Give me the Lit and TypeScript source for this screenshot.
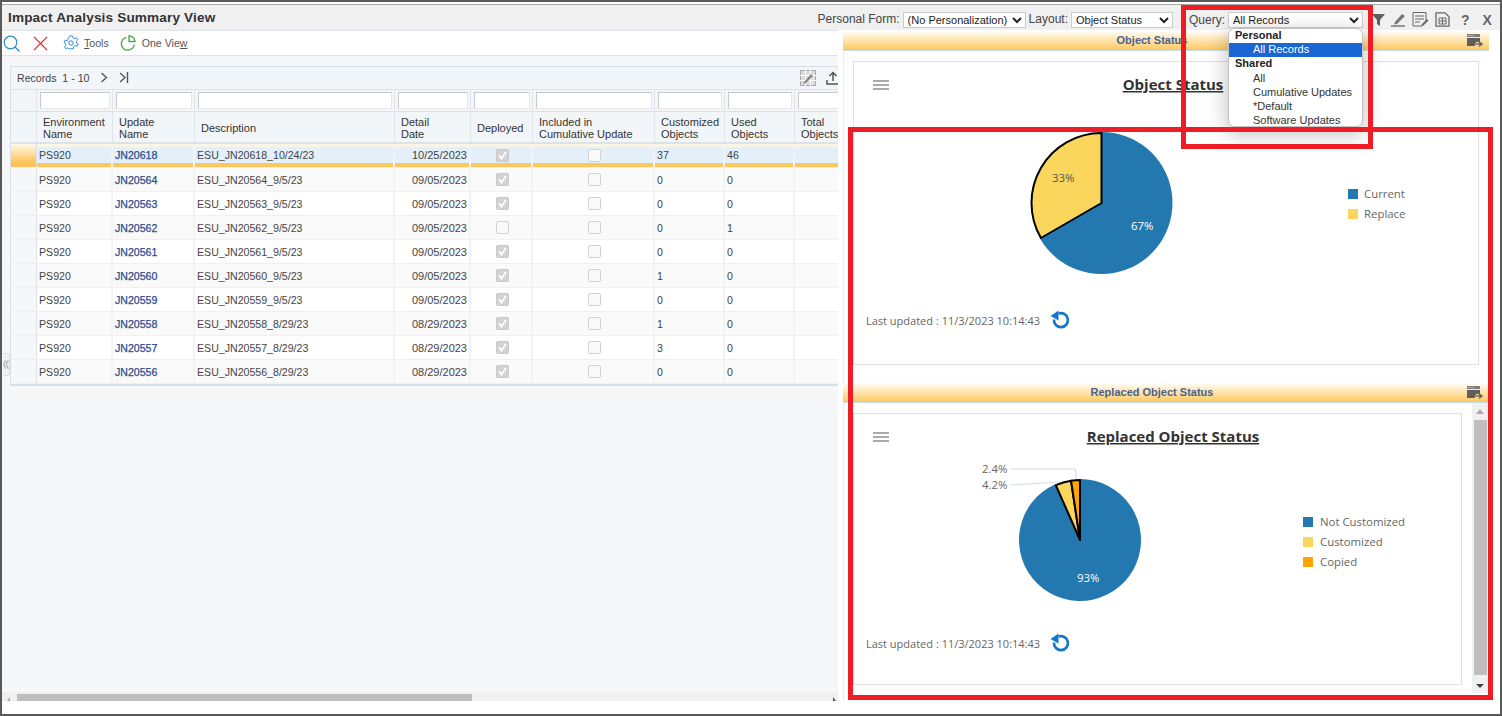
import { LitElement, html, css, svg } from "lit";
import { customElement } from "lit/decorators.js";

const rows = [
  ["JN20618", "10/24/23", "10/25/2023", true, "37", "46"],
  ["JN20564", "9/5/23", "09/05/2023", true, "0", "0"],
  ["JN20563", "9/5/23", "09/05/2023", true, "0", "0"],
  ["JN20562", "9/5/23", "09/05/2023", false, "0", "1"],
  ["JN20561", "9/5/23", "09/05/2023", true, "0", "0"],
  ["JN20560", "9/5/23", "09/05/2023", true, "1", "0"],
  ["JN20559", "9/5/23", "09/05/2023", true, "0", "0"],
  ["JN20558", "8/29/23", "08/29/2023", true, "1", "0"],
  ["JN20557", "8/29/23", "08/29/2023", true, "3", "0"],
  ["JN20556", "8/29/23", "08/29/2023", true, "0", "0"],
] as const;

const heads = ["", "Environment<br>Name", "Update<br>Name", "Description", "Detail<br>Date", "Deployed", "Included in<br>Cumulative Update", "Customized<br>Objects", "Used<br>Objects", "Total<br>Objects"];

const wedge = (cx: number, cy: number, r: number, a0: number, a1: number) => {
  const p = (a: number) => `${cx + r * Math.sin((a * Math.PI) / 180)} ${cy - r * Math.cos((a * Math.PI) / 180)}`;
  const large = Math.abs(a1 - a0) > 180 ? 1 : 0;
  return `M${cx} ${cy}L${p(a0)}A${r} ${r} 0 ${large} 1 ${p(a1)}Z`;
};

const burger = (y: number) => svg`<path d="M873 ${y}h16M873 ${y + 4}h16M873 ${y + 8}h16" stroke="#8f8f8f" stroke-width="1.6" fill="none"/>`;

const refresh = html`<svg class="refresh" width="22" height="20" viewBox="0 0 22 20"><path d="M8.5 3.6A7 7 0 1 1 4 9.5" fill="none" stroke="#1577c9" stroke-width="2.6"/><path d="M0.5 6 L8.5 0.6 V10.6Z" fill="#1577c9"/></svg>`;

const bandIcon = html`<svg class="band-icon" width="17" height="13" viewBox="0 0 17 13"><path d="M0 0h13v3H0z" fill="#7d7d7d"/><path d="M0 4h13v4H9v1.500H8V12H0z" fill="#5f5f5f"/><path d="M1.500 1.500h1M3.500 1.500h1M5.500 1.500h1" stroke="#fff" stroke-width=".8"/><path d="M8.500 10h5.500M12 7.800l3 2.300-3 2.300" fill="none" stroke="#666" stroke-width="1.500"/></svg>`;

@customElement("app-root")
export class AppRoot extends LitElement {
  static styles = css`
    :host { display: block; position: relative; width: 1502px; height: 716px; overflow: hidden; background: #fff; font-family: "Liberation Sans", Arial, sans-serif; font-size: 10.6px; color: #333; }
    .frame { box-sizing: border-box; height: 716px; border: 2px solid #5a5a5a; padding-top: 2px; display: flex; flex-direction: column; background: #fff; }
    .titlebar { height: 26px; box-sizing: border-box; border-top: 1px solid #a8a8a8; background: #f0f0f0; display: flex; align-items: center; padding: 0 0 0 6px; flex: none; }
    h1 { margin: 0; font-size: 13.6px; font-weight: bold; color: #333; flex: 1; letter-spacing: .15px; }
    .lbl { font-size: 12px; color: #444; margin-top: 2px; }
    .qwrap .lbl { margin-top: 0; }
    select { font: 11px "Liberation Sans", Arial, sans-serif; height: 16px; border: 1px solid #ccc; background: #fff; color: #222; padding: 0; border-radius: 0; box-sizing: border-box; }
    .s1 { width: 123px; margin: 5px 3px 0 3px; }
    .s2 { width: 102px; margin: 5px 0 0 3px; }
    .s3 { width: 135px; margin: 0 0 0 3px; }
    .qwrap { position: relative; display: flex; align-items: center; margin: 5px 0 0 16px; }
    .tools { display: flex; align-items: center; margin: 4px 0 0 9px; width: 128px; color: #5f5f5f; }
    .tools svg { flex: none; }
    .tools b { font-size: 14px; color: #666; }
    .main { flex: 1; display: flex; min-height: 0; }
    .left { width: 836px; flex: none; display: flex; flex-direction: column; position: relative; }
    .toolbar { height: 26px; box-sizing: border-box; border-top: 1px solid #dde3e8; border-bottom: 1px solid #dde3e8; display: flex; align-items: center; background: #fff; flex: none; color: #555; }
    .toolbar svg { flex: none; }
    .toolbar u { text-decoration: underline; }
    .content { flex: 1; background: #f5f7f9; padding: 10px 0 0 8px; overflow: hidden; min-height: 0; }
    .grid { width: 854px; border: 1px solid #d8e0e7; border-bottom-width: 2px; box-sizing: border-box; background: #f3f6f8; }
    .rec { height: 23px; box-sizing: border-box; display: flex; align-items: center; padding: 0 0 1px 6px; border-bottom: 1px solid #dbe2e8; color: #444; font-size: 10.6px; }
    .rec .pg { width: 83px; }
    .r { display: grid; box-sizing: border-box; grid-template-columns: 26px 76px 82px 200px 76px 62px 122px 70px 70px 70px; }
    .r > div { box-sizing: border-box; border-right: 1px solid #dfe5ea; display: flex; align-items: center; min-width: 0; }
    .filter { height: 22px; border-bottom: 1px solid #dbe2e8; }
    .filter i { display: block; box-sizing: border-box; height: 17px; width: calc(100% - 5px); margin: 0 2px 0 3px; background: #fff; border: 1px solid #c9c9c9; border-bottom-color: #e6e6e6; border-right-color: #e6e6e6; }
    .head { height: 32px; border-bottom: 2px solid #dbe2e8; line-height: 12px; font-size: 11px; }
    .head > div { padding: 2px 0 0 6px; color: #333; }
    .data { height: 24px; background: #fff; border-bottom: 1px solid #eef0f2; }
    .data.alt { background: #fafafa; }
    .data > div { border-right: 2px solid #f1f3f5; padding-left: 2px; color: #444; }
    .data .rh { background: #f5f7fa; border-right: 1px solid #dbe2e8; }
    .data .num { justify-content: flex-end; padding: 0 2px 0 0; font-size: 11px; }
    .data .mid { justify-content: center; padding: 0 0 0 2px; }
    .data a { color: #2a4d8f; -webkit-text-stroke: .25px #2a4d8f; }
    .data.sel > div { background: #e3f0fa; box-shadow: inset 0 3px #fbf5e6, inset 0 -4px #fec75e; padding-bottom: 1px; }
    .data.sel .rh { background: linear-gradient(#fff8ea, #fdc45a 80%); box-shadow: none; }
    .cb { width: 13px; height: 13px; box-sizing: border-box; border: 1px solid #d2d2d2; border-radius: 2px; background: #fafafa; display: block; }
    .cb.on { background: #d3d3d3; border-color: #c8c8c8; }
    .cb svg { display: block; }
    .handle { position: absolute; left: 1px; top: 323px; width: 7px; height: 23px; box-sizing: border-box; background: #eef2f6; border: 1px solid #d8e0e7; border-left: 0; border-radius: 0 3px 3px 0; display: flex; align-items: center; }
    .hscroll { height: 9px; flex: none; background: #f0f0f0; display: flex; align-items: center; padding: 2px 0 0 15px; box-sizing: border-box; position: relative; }
    .hscroll i { display: block; width: 455px; height: 7px; background: #bebebe; }
    .hscroll s { position: absolute; bottom: 0; width: 0; height: 0; border-style: solid; }
    .hscroll .la { left: 5px; border-width: 0 0 4px 3px; border-color: transparent transparent #aaa transparent; }
    .hscroll .ra { right: 2px; border-width: 4px 0 0 3px; border-color: transparent transparent transparent #555; }
    .foot { height: 13px; flex: none; background: #fff; }
    .right { margin-left: 5px; width: 646px; flex: none; padding-top: 1px; background: #fff; display: flex; flex-direction: column; }
    .band { height: 18px; padding: 0 28px 1px 0; box-sizing: content-box; flex: none; background: linear-gradient(#fffdf8, #fdc95f); border-bottom: 1px solid #c6dbe8; display: flex; align-items: center; justify-content: center; position: relative; font-weight: bold; font-size: 11px; color: #4d5f8e; }
    .band-icon { position: absolute; right: 5px; top: 3px; }
    .s-top { flex: none; height: 332px; padding: 10px 0 0 10px; box-sizing: border-box; border-left: 1px solid #e4eef6; }
    .s-bot { display: flex; height: 297px; flex: none; padding: 10px 0 0 10px; box-sizing: border-box; border-left: 1px solid #e4eef6; }
    .card { box-sizing: border-box; border: 1px solid #e0e0e0; background: #fff; flex: none; }
    .c1 { width: 626px; height: 304px; margin-left: -1px; }
    .c2 { width: 609px; height: 272px; margin-left: -1px; }
    .card svg.chart { display: block; }
    .card text { font-family: "Open Sans", sans-serif; fill: #666; font-size: 11.4px; }
    .card text.ttl { font-size: 15px; font-weight: bold; fill: #333; text-decoration: underline; text-anchor: middle; }
    .card text.w { fill: #fff; }
    .card text.d { fill: #555; }
    .updated { height: 28px; display: flex; align-items: center; padding-left: 12px; font-family: "Open Sans", sans-serif; font-size: 11px; color: #666; }
    .refresh { margin-left: 10px; flex: none; }
    .vscroll { width: 16px; flex: none; margin-left: 10px; height: 291px; margin-top: -11px; background: #f0f0f0; display: flex; flex-direction: column; align-items: center; }
    .vscroll i { display: block; width: 13px; height: 255px; background: #bebebe; flex: none; }
    .vscroll .u { width: 0; height: 0; margin: 7px 0 6px; border: 4px solid transparent; border-top: 0; border-bottom: 5px solid #aaa; }
    .vscroll .dn { width: 0; height: 0; margin: 9px 0 0; border: 4px solid transparent; border-bottom: 0; border-top: 4px solid #444; }
    .menu { position: absolute; left: 39px; top: 16px; width: 135px; height: 99px; box-sizing: border-box; background: #fff; border: 1px solid #c4c4c4; border-radius: 7px; z-index: 3; box-shadow: 0 6px 22px rgba(0,0,0,.28); font-size: 11px; overflow: hidden; color: #333; }
    .menu div { height: 14px; line-height: 13px; padding-left: 24px; white-space: nowrap; }
    .menu .g { font-weight: bold; padding-left: 6px; color: #222; }
    .menu .on { background: #1a66d2; color: #fff; }
    .menu .on + .g { margin-bottom: 1px; }
    .anno { position: absolute; box-sizing: border-box; border: 5px solid #ee1c25; z-index: 5; pointer-events: none; }
    .a1 { left: 1181px; top: 5px; width: 192px; height: 144px; }
    .a2 { left: 848px; top: 127px; width: 645px; height: 573px; }
  `;

  private chart1() {
    return html`<svg class="chart" width="624" height="244" viewBox="854 62 624 244">
      ${burger(81)}
      <text class="ttl" x="1173" y="90">Object Status</text>
      <path d=${wedge(1101.5, 203, 71, 0, 240)} fill="#2378b0"/>
      <path d=${wedge(1101.5, 203, 70, 240, 360)} fill="#fad65c" stroke="#000" stroke-width="2" stroke-linejoin="round"/>
      <text class="d" x="1052" y="182">33%</text>
      <text class="w" x="1131" y="230">67%</text>
      <rect x="1348" y="189" width="10" height="10" fill="#2378b0"/>
      <text x="1364" y="198">Current</text>
      <rect x="1348" y="209" width="10" height="10" fill="#fad65c"/>
      <text x="1364" y="218">Replace</text>
    </svg>`;
  }

  private chart2() {
    return html`<svg class="chart" width="607" height="215" viewBox="854 414 607 215">
      ${burger(433)}
      <text class="ttl" x="1173" y="442">Replaced Object Status</text>
      <path d="M1010 469H1075.500L1076.500 479M1010 485L1060 482" fill="none" stroke="#d5dde8" stroke-width="1.200"/>
      <text x="982" y="473">2.4%</text>
      <text x="982" y="489">4.2%</text>
      <path d=${wedge(1080, 540, 61, 0, 336.2)} fill="#2378b0"/>
      <path d=${wedge(1080, 540, 60, 336.2, 351.4)} fill="#fad65c" stroke="#000" stroke-width="2" stroke-linejoin="round"/>
      <path d=${wedge(1080, 540, 60, 351.4, 360)} fill="#ffa500" stroke="#000" stroke-width="2" stroke-linejoin="round"/>
      <text class="w" x="1077" y="582">93%</text>
      <rect x="1303" y="517" width="10" height="10" fill="#2378b0"/>
      <text x="1320" y="526">Not Customized</text>
      <rect x="1303" y="537" width="10" height="10" fill="#fad65c"/>
      <text x="1320" y="546">Customized</text>
      <rect x="1303" y="557" width="10" height="10" fill="#ffa500"/>
      <text x="1320" y="566">Copied</text>
    </svg>`;
  }

  render() {
    return html`
      <div class="frame">
        <div class="titlebar">
          <h1>Impact Analysis Summary View</h1>
          <span class="lbl">Personal Form:</span>
          <select class="s1"><option>(No Personalization)</option></select>
          <span class="lbl">Layout:</span>
          <select class="s2"><option>Object Status</option></select>
          <div class="qwrap">
            <span class="lbl">Query:</span>
            <select class="s3"><option>All Records</option></select>
            <div class="menu">
              <div class="g">Personal</div>
              <div class="on">All Records</div>
              <div class="g">Shared</div>
              <div>All</div><div>Cumulative Updates</div><div>*Default</div><div>Software Updates</div>
            </div>
          </div>
          <div class="tools">
            <svg width="13" height="13" viewBox="0 0 13 13"><path d="M0 1h13L8 7v6L5 11V7z" fill="#5f5f5f"/></svg>
            <svg style="margin-left:6px" width="15" height="14" viewBox="0 0 15 14"><path d="M4 9l7-8 3 2-8 8-3 .500z" fill="#777"/><path d="M0 13h14" stroke="#777" stroke-width="1.500"/></svg>
            <svg style="margin-left:6px" width="17" height="15" viewBox="0 0 17 15"><path d="M1 .500h13v9l-4 4.500H1z" fill="none" stroke="#666"/><path d="M3 4h9M3 7h9M3 10h5" stroke="#666"/><path d="M10 12l5-5 1.500 1.500-5 5-2 .500z" fill="#666"/></svg>
            <svg style="margin-left:6px" width="15" height="15" viewBox="0 0 15 15"><path d="M1 .800h9l4 4v9.400H1z" fill="none" stroke="#666" stroke-width="1.300"/><path d="M4 6h7v6H4zM7.500 6v6M4 9h7" fill="none" stroke="#666"/></svg>
            <b style="margin-left:11px">?</b>
            <b style="margin-left:13px">X</b>
          </div>
        </div>
        <div class="main">
          <div class="left">
            <div class="toolbar">
              <svg style="margin-left:1px" width="17" height="17" viewBox="0 0 17 17"><circle cx="7.500" cy="7.500" r="6.300" fill="none" stroke="#2c8ad0" stroke-width="1.200"/><path d="M12 12l4.500 4.500" stroke="#2c8ad0" stroke-width="1.200"/></svg>
              <svg style="margin-left:13px" width="15" height="15" viewBox="0 0 15 15"><path d="M1 1l13 13M14 1L1 14" stroke="#e0353a" stroke-width="1.200"/></svg>
              <svg style="margin-left:15px" width="16" height="16" viewBox="0 0 16 16"><path d="M6.500 1h3l.5 2 1.800.8 1.800-1 1.500 2.200-1.400 1.400.2 2 1.600 1-1.300 2.400-2-.6-1.500 1.200-.4 2.100h-3L6 14.500l-1.800-.9-1.900 .9L1 12.200l1.400-1.400-.2-2-1.700-1 1.300-2.400 2 .600L5.300 2.900z" fill="none" stroke="#2c8ad0" transform="translate(.5 0) scale(.95)"/><circle cx="8" cy="8" r="2.200" fill="none" stroke="#2c8ad0"/></svg>
              <span style="margin-left:5px"><u>T</u>ools</span>
              <svg style="margin-left:11px" width="16" height="16" viewBox="0 0 16 16"><path d="M6.500 2.300A6.500 6.500 0 1 0 14.300 9.500" fill="none" stroke="#4aa34a" stroke-width="1.300"/><path d="M9 1v5.500h6A6 6 0 0 0 9 1z" fill="none" stroke="#4aa34a" stroke-width="1.300"/></svg>
              <span style="margin-left:6px">One Vie<u>w</u></span>
            </div>
            <div class="content">
              <div class="grid">
                <div class="rec">
                  <span class="pg">Records&nbsp; 1 - 10</span>
                  <svg width="8" height="11" viewBox="0 0 8 11"><path d="M1.500 1l5 4.500-5 4.500" fill="none" stroke="#555" stroke-width="1.400"/></svg>
                  <svg style="margin-left:11px" width="10" height="11" viewBox="0 0 10 11"><path d="M1 1l5 4.500-5 4.500M8.500 0v11" fill="none" stroke="#555" stroke-width="1.400"/></svg>
                  <span style="width:671px"></span>
                  <svg width="16" height="16" viewBox="0 0 16 16"><rect x=".5" y=".5" width="15" height="15" fill="#ddd" stroke="#aaa"/><path d="M0 5.500h16M0 10.500h16M5.500 0v16M10.500 0v16" stroke="#fff"/><path d="M4 12l7-8 2 2-7 7-3 1z" fill="#888"/></svg>
                  <svg style="margin-left:10px" width="14" height="14" viewBox="0 0 14 14"><path d="M7 10V2M3.500 5L7 1.500 10.500 5M1 9v4h12V9" fill="none" stroke="#555" stroke-width="1.500"/></svg>
                </div>
                <div class="r filter">${heads.map((_, i) => html`<div>${i ? html`<i></i>` : ""}</div>`)}</div>
                <div class="r head">${heads.map((h) => html`<div><span .innerHTML=${h}></span></div>`)}</div>
                ${rows.map((r, i) => html`
                  <div class="r data ${i === 0 ? "sel" : ""} ${i % 2 ? "alt" : ""}">
                    <div class="rh"></div>
                    <div>PS920</div>
                    <div><a>${r[0]}</a></div>
                    <div>ESU_${r[0]}_${r[1]}</div>
                    <div class="num">${r[2]}</div>
                    <div class="mid"><span class="cb ${r[3] ? "on" : ""}">${r[3] ? html`<svg width="11" height="11" viewBox="0 0 11 11"><path d="M2 5.500l2.500 3L9 2" fill="none" stroke="#fff" stroke-width="1.800"/></svg>` : ""}</span></div>
                    <div class="mid"><span class="cb"></span></div>
                    <div>${r[4]}</div>
                    <div>${r[5]}</div>
                    <div></div>
                  </div>`)}
              </div>
            </div>
            <div class="handle"><svg width="7" height="11" viewBox="0 0 7 11"><path d="M3.200 .5L.7 5.500l2.500 5M6.200 .5L3.700 5.500l2.500 5" fill="none" stroke="#8a8f96"/></svg></div>
            <div class="hscroll"><s class="la"></s><i></i><s class="ra"></s></div>
            <div class="foot"></div>
          </div>
          <div class="right">
            <div class="band">Object Status${bandIcon}</div>
            <div class="s-top">
              <div class="card c1">${this.chart1()}<div class="updated">Last updated : 11/3/2023 10:14:43${refresh}</div></div>
            </div>
            <div class="band">Replaced Object Status${bandIcon}</div>
            <div class="s-bot">
              <div class="card c2">${this.chart2()}<div class="updated">Last updated : 11/3/2023 10:14:43${refresh}</div></div>
              <div class="vscroll"><span class="u"></span><i></i><span class="dn"></span></div>
            </div>
          </div>
        </div>
      </div>
      <div class="anno a1"></div>
      <div class="anno a2"></div>
    `;
  }
}
